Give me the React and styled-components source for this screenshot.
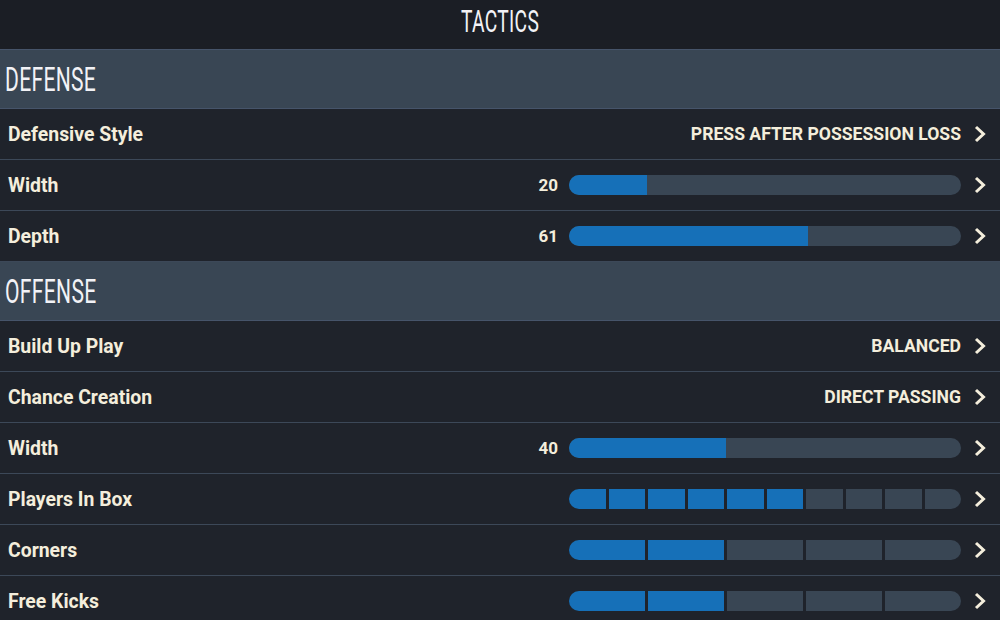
import React from "react";
import styled, { createGlobalStyle } from "styled-components";

const Global = createGlobalStyle`
  html, body { margin: 0; padding: 0; background: #1f232b; }
  body { font-family: Roboto, "Liberation Sans", sans-serif; }
  * { box-sizing: border-box; }
`;

const Page = styled.div`
  width: 1000px;
  height: 620px;
  overflow: hidden;
  background: #1f232b;
  color: #f4eedc;
`;

const TitleBar = styled.div`
  height: 50px;
  background: #1b1e25;
  border-bottom: 1px solid #46546a;
  display: flex;
  align-items: center;
  justify-content: center;
  padding-bottom: 6px;
`;

const Condensed = styled.span`
  display: inline-block;
  font-family: Roboto, sans-serif;
  font-weight: 400;
  font-size: ${(p) => p.$size}px;
  letter-spacing: 0.5px;
  color: #f2f2f6;
  transform: scaleX(0.62);
  transform-origin: ${(p) => p.$origin};
  white-space: nowrap;
  line-height: 1;
`;

const SectionHeader = styled.div`
  height: 59px;
  background: #394654;
  border-bottom: 1px solid #46546a;
  display: flex;
  align-items: center;
  padding-left: 5px;
  padding-bottom: 1px;
`;

const Row = styled.div`
  height: 51px;
  border-bottom: 1px solid #3c4858;
  display: flex;
  align-items: center;
  padding: 0 13px 0 8px;
`;

const Label = styled.div`
  flex: 1;
  font-size: 19.4px;
  font-weight: 700;
  white-space: nowrap;
`;

const Value = styled.div`
  font-size: 17.6px;
  font-weight: 700;
  text-transform: uppercase;
  white-space: nowrap;
`;

const Number = styled.div`
  font-size: 17px;
  font-weight: 700;
  margin-right: 11px;
`;

const Track = styled.div`
  width: 392px;
  height: 20px;
  border-radius: 10px;
  background: #394654;
  overflow: hidden;
`;

const Fill = styled.div`
  height: 100%;
  background: #1670b8;
`;

const Segments = styled.div`
  width: 392px;
  height: 20px;
  border-radius: 10px;
  overflow: hidden;
  display: flex;
  gap: 3px;
`;

const Segment = styled.div`
  flex: 1;
  background: ${(p) => (p.$on ? "#1670b8" : "#394654")};
`;

const Chevron = styled.svg`
  width: 14px;
  height: 18px;
  margin-left: 12px;
  flex: none;
`;

function Arrow() {
  return (
    <Chevron viewBox="0 0 14 18">
      <path d="M3 2 L10.5 9 L3 16" fill="none" stroke="#f4eedc" strokeWidth="3" strokeLinecap="butt" strokeLinejoin="miter" />
    </Chevron>
  );
}

function ChoiceRow({ label, value }) {
  return (
    <Row>
      <Label>{label}</Label>
      <Value>{value}</Value>
      <Arrow />
    </Row>
  );
}

function SliderRow({ label, value }) {
  return (
    <Row>
      <Label>{label}</Label>
      <Number>{value}</Number>
      <Track>
        <Fill style={{ width: `${value}%` }} />
      </Track>
      <Arrow />
    </Row>
  );
}

function SegmentRow({ label, total, filled }) {
  return (
    <Row>
      <Label>{label}</Label>
      <Segments>
        {Array.from({ length: total }, (_, i) => (
          <Segment key={i} $on={i < filled} />
        ))}
      </Segments>
      <Arrow />
    </Row>
  );
}

function Section({ title }) {
  return (
    <SectionHeader>
      <Condensed $size={34} $origin="left center">{title}</Condensed>
    </SectionHeader>
  );
}

export default function App() {
  return (
    <Page>
      <Global />
      <TitleBar>
        <Condensed $size={31} $origin="center center">TACTICS</Condensed>
      </TitleBar>
      <Section title="DEFENSE" />
      <ChoiceRow label="Defensive Style" value="Press After Possession Loss" />
      <SliderRow label="Width" value={20} />
      <SliderRow label="Depth" value={61} />
      <Section title="OFFENSE" />
      <ChoiceRow label="Build Up Play" value="Balanced" />
      <ChoiceRow label="Chance Creation" value="Direct Passing" />
      <SliderRow label="Width" value={40} />
      <SegmentRow label="Players In Box" total={10} filled={6} />
      <SegmentRow label="Corners" total={5} filled={2} />
      <SegmentRow label="Free Kicks" total={5} filled={2} />
    </Page>
  );
}
